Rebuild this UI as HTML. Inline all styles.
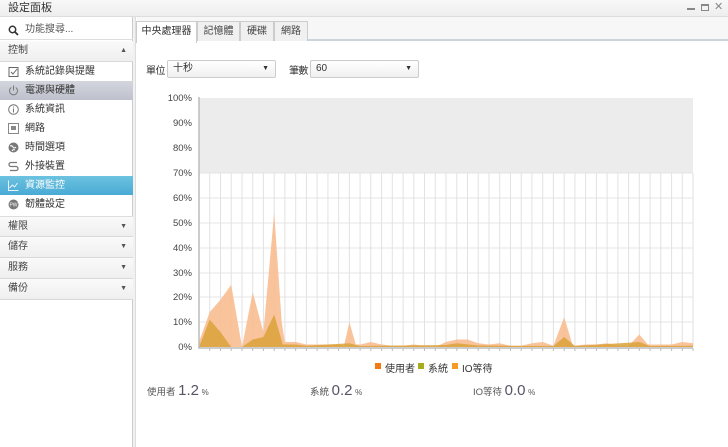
<!DOCTYPE html>
<html><head><meta charset="utf-8">
<style>
*{box-sizing:border-box;margin:0;padding:0}
body{width:728px;height:447px;overflow:hidden;background:#fff;font-family:"Liberation Sans","Noto Sans CJK TC",sans-serif;font-size:10px;color:#333;position:relative}
.abs{position:absolute}
#title{left:0;top:0;width:728px;height:17px;background:linear-gradient(#f8f8f8,#eeeeee);border-bottom:1px solid #ddd;font-size:11px;line-height:16px;padding-left:8px;color:#333}
#side{left:0;top:17px;width:133px;height:430px;background:#fff;border-right:1px solid #ccc}
#side2{left:133px;top:17px;width:3px;height:430px;background:#f1f1f1;border-right:1px solid #ddd}
.row{position:absolute;left:0;width:133px;height:19px;line-height:19px;padding-left:25px;font-size:10px;color:#333}
.grp{position:absolute;left:0;width:133px;height:21px;line-height:20px;padding-left:8px;font-size:10px;color:#444;background:linear-gradient(#fafafa,#efefef);border-bottom:1px solid #d9d9d9}
.grp b{position:absolute;right:6px;top:0;font-size:7px;font-weight:normal;color:#555}
.ic{position:absolute;left:8px;top:4px;width:11px;height:11px}
.tab{position:absolute;top:21px;height:20px;border:1px solid #ccc;border-bottom:none;background:#f0f0f0;text-align:center;line-height:19px;font-size:10px;color:#444}
.sel{position:absolute;top:60px;height:18px;border:1px solid #ccc;border-radius:2px;background:linear-gradient(#fff,#f0f0f0);font-size:10px;line-height:16px;padding-left:5px}
.sel b{position:absolute;right:6px;top:0;font-size:7px;font-weight:normal}
</style></head><body>
<div id="title" class="abs">設定面板</div>
<div class="abs" style="left:687px;top:8px;width:8px;height:2px;background:#888"></div>
<div class="abs" style="left:701px;top:4px;width:8px;height:7px;border:1px solid #888;border-top-width:2px"></div>
<div class="abs" style="left:714px;top:0px;font-size:11px;color:#888">✕</div>

<div id="side" class="abs">
  <div class="row" style="top:3px;height:20px;line-height:20px;border-bottom:1px solid #ddd;color:#555">
    <svg class="ic" viewBox="0 0 11 11" style="top:5px"><circle cx="4.5" cy="4.5" r="3.2" fill="none" stroke="#333" stroke-width="1.5"/><path d="M7 7l3 3" stroke="#333" stroke-width="1.8"/></svg>功能搜尋...</div>
  <div class="grp" style="top:24px;padding-left:8px">控制<b>▲</b></div>
  <div class="row" style="top:45px"><svg class="ic" viewBox="0 0 11 11"><rect x="1" y="1.5" width="9" height="9" fill="none" stroke="#666"/><path d="M3 6l2 2 4-5" fill="none" stroke="#666"/></svg>系統記錄與提醒</div>
  <div class="row" style="top:64px;background:linear-gradient(#d4d6de,#bec1cc)"><svg class="ic" viewBox="0 0 11 11"><path d="M3.3 2.5A4 4 0 1 0 7.7 2.5" fill="none" stroke="#777"/><path d="M5.5 0.5v5" stroke="#777"/></svg>電源與硬體</div>
  <div class="row" style="top:83px"><svg class="ic" viewBox="0 0 11 11"><circle cx="5.5" cy="5.5" r="4.8" fill="none" stroke="#777"/><path d="M5.5 4.5v4M5.5 2.5v1" stroke="#777"/></svg>系統資訊</div>
  <div class="row" style="top:102px"><svg class="ic" viewBox="0 0 11 11"><rect x="0.5" y="0.5" width="10" height="10" fill="#fff" stroke="#888"/><rect x="3" y="3" width="5" height="4" fill="#888"/></svg>網路</div>
  <div class="row" style="top:121px"><svg class="ic" viewBox="0 0 11 11"><circle cx="5.5" cy="5.5" r="5" fill="#777"/><path d="M2 4q2-1 3 1t3 0M4 9q1-2 3-1" fill="none" stroke="#fff"/></svg>時間選項</div>
  <div class="row" style="top:140px"><svg class="ic" viewBox="0 0 11 11"><path d="M9 1.5H3a2 2 0 0 0 0 4h5a2 2 0 0 1 0 4H2" fill="none" stroke="#777" stroke-width="1.3"/></svg>外接裝置</div>
  <div class="row" style="top:159px;background:linear-gradient(#6cc2e0,#49aad4);color:#fff"><svg class="ic" viewBox="0 0 11 11"><path d="M0.5 0.5v10h10" fill="none" stroke="#e8f4fa"/><path d="M1.5 8l3-3 2 2 3-4" fill="none" stroke="#e8f4fa"/></svg>資源監控</div>
  <div class="row" style="top:178px"><svg class="ic" viewBox="0 0 11 11"><circle cx="5.5" cy="5.5" r="5" fill="#777"/><text x="5.5" y="7.5" font-size="5" fill="#fff" text-anchor="middle" font-family="Liberation Sans">PW</text></svg>韌體設定</div>
  <div class="grp" style="top:199px;border-top:1px solid #ddd">權限<b>▼</b></div>
  <div class="grp" style="top:220px">儲存<b>▼</b></div>
  <div class="grp" style="top:241px">服務<b>▼</b></div>
  <div class="grp" style="top:262px">備份<b>▼</b></div>
</div>
<div id="side2" class="abs"></div>

<div class="abs" style="left:137px;top:17px;width:591px;height:24px;background:#f7f7f7;border-bottom:2px solid #ccd3d9"></div>
<div class="tab" style="left:136px;width:61px;background:#fff;height:22px;color:#333">中央處理器</div>
<div class="tab" style="left:197px;width:43px">記憶體</div>
<div class="tab" style="left:240px;width:34px">硬碟</div>
<div class="tab" style="left:274px;width:34px">網路</div>

<div class="abs" style="left:146px;top:62px;font-size:10px;letter-spacing:-0.5px">單位</div>
<div class="sel" style="left:167px;width:109px">十秒<b>▼</b></div>
<div class="abs" style="left:289px;top:62px;font-size:10px;letter-spacing:-0.5px">筆數</div>
<div class="sel" style="left:310px;width:109px">60<b>▼</b></div>

<svg class="abs" style="left:0;top:0" width="728" height="447">
  <rect x="199" y="98" width="494" height="75" fill="#ececec"/>
  <g stroke="#e4e4e4" stroke-width="1">
    <path d="M199 173H693M199 198H693M199 223H693M199 248H693M199 273H693M199 297H693M199 322H693"/>
  </g>
  <g id="vg" stroke="#e2e2e2" stroke-width="1"></g>
  <polygon fill="#f8bd90" fill-opacity="0.9" points="199,347 199,342 209.7,312.1 220.5,299.7 231.2,284.8 237.7,322.1 242,347 252.7,292.2 263.4,332.1 274.2,212.5 281.7,322.1 284.9,342 295.7,342 306.4,344.5 338.6,344.5 344,345.8 349.4,322.1 355.8,344.5 360.1,344.5 370.8,342 381.6,344.5 392.3,345.8 403.1,345.8 413.8,344.5 424.5,345.8 435.3,347 446,342 456.8,339.5 467.5,339.5 478.2,343.3 489,344.5 499.7,343.3 510.5,345.8 521.2,345.8 531.9,343.3 542.7,342 553.4,345.8 564.2,317.1 572.8,345.8 585.6,344.5 596.4,344.5 607.1,343.3 617.9,345.8 628.6,345.8 639.3,334.5 647.9,344.5 660.8,344.5 671.6,344.5 682.3,342 693,343.3 693,347"/>
  <polygon fill="#dba23a" fill-opacity="0.85" points="199,347 209.7,319.6 220.5,332.1 231.2,347 242,347 252.7,339.5 263.4,337 274.2,314.6 282.8,344.5 295.7,344.5 306.4,345.8 349.4,343.3 360.1,346 446,345 456.8,343.3 478.2,345.5 553.4,346 564.2,337 574.9,346 639.3,342 650,346 693,345.8 693,347"/>
  <path d="M199 97V348H693" fill="none" stroke="#bbb" stroke-width="1.5"/>
  <g font-size="9.5" fill="#444" text-anchor="end" font-family="Liberation Sans">
    <text x="192" y="101">100%</text><text x="192" y="126">90%</text><text x="192" y="151">80%</text><text x="192" y="176">70%</text><text x="192" y="201">60%</text><text x="192" y="226">50%</text><text x="192" y="251">40%</text><text x="192" y="276">30%</text><text x="192" y="300">20%</text><text x="192" y="325">10%</text><text x="192" y="350">0%</text>
  </g>
  <rect x="375" y="363" width="6" height="6" fill="#f27a12"/>
  <rect x="418" y="363" width="6" height="6" fill="#a6ac1d"/>
  <rect x="452" y="363" width="6" height="6" fill="#f79a25"/>
</svg>
<div class="abs" style="left:385px;top:360px;font-size:10px">使用者</div>
<div class="abs" style="left:428px;top:360px;font-size:10px">系統</div>
<div class="abs" style="left:462px;top:360px;font-size:10px">IO等待</div>

<div class="abs" style="left:147px;top:382px;color:#555;font-size:9.5px">使用者 <span style="font-size:15px;color:#556">1.2</span> <span style="font-size:8px">%</span></div>
<div class="abs" style="left:310px;top:382px;color:#555;font-size:9.5px">系統 <span style="font-size:15px;color:#556">0.2</span> <span style="font-size:8px">%</span></div>
<div class="abs" style="left:473px;top:382px;color:#555;font-size:9.5px">IO等待 <span style="font-size:15px;color:#556">0.0</span> <span style="font-size:8px">%</span></div>

<script>
var g=document.getElementById('vg'),s='',t='';
for(var i=1;i<=46;i++){var x=(199+i*10.74).toFixed(1);s+='M'+x+' 173V347';t+='M'+x+' 348V351';}
g.innerHTML='<path d="'+s+'"/><path stroke="#bbb" d="'+t+'"/>';
</script>
</body></html>
